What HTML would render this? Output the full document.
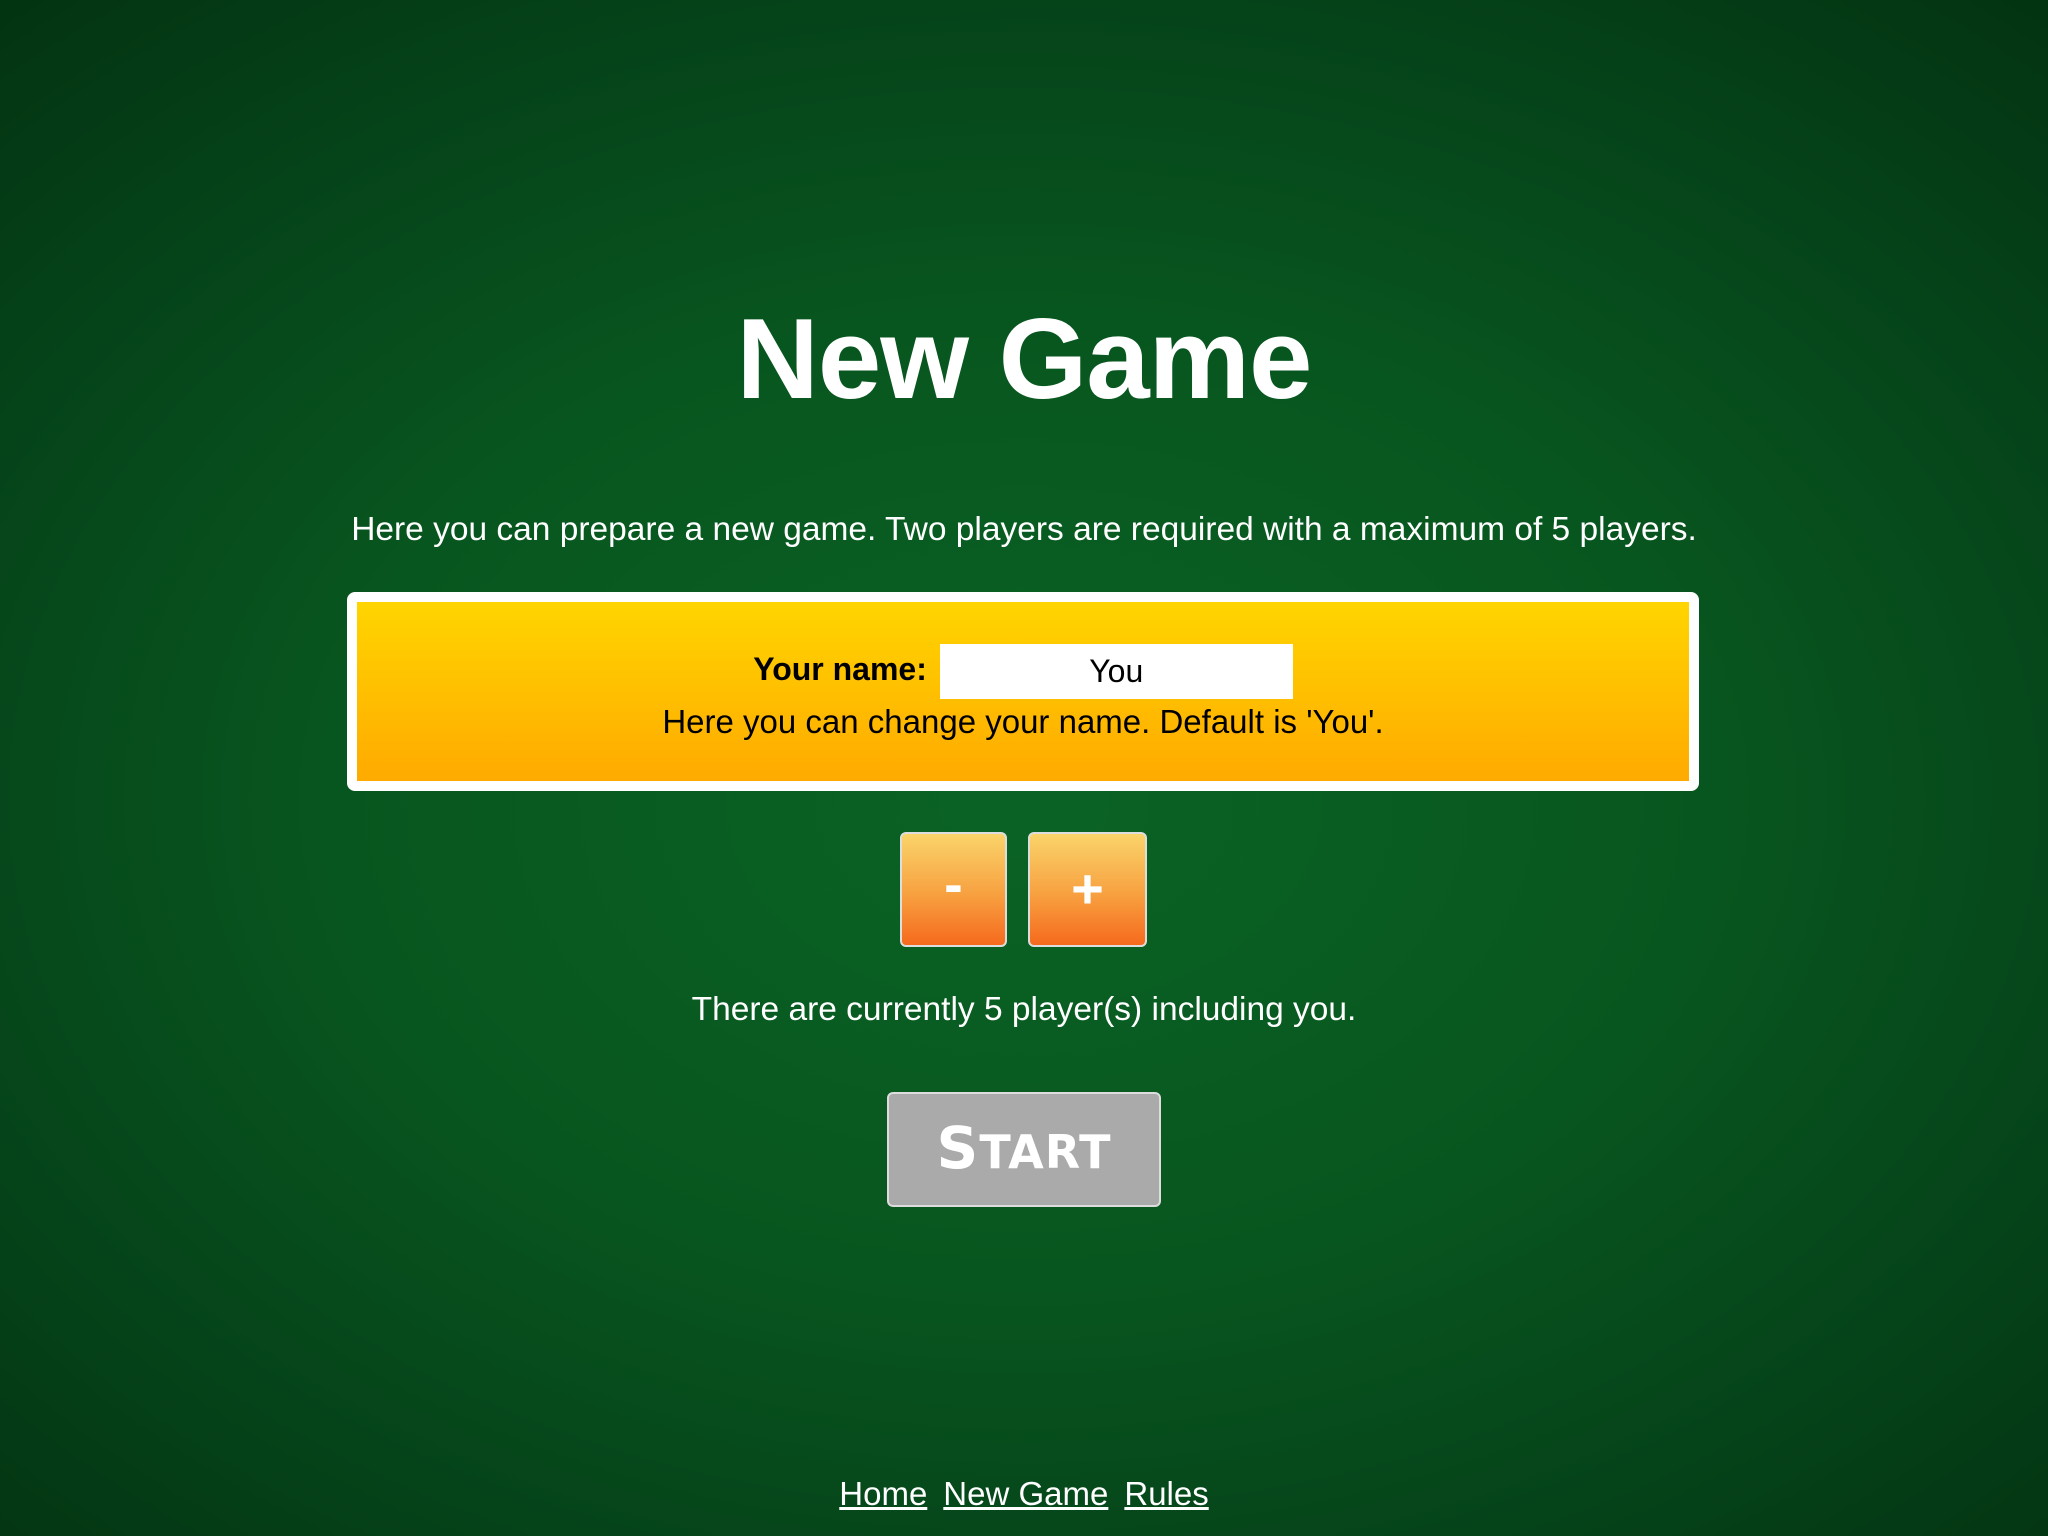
<!DOCTYPE html>
<html><head><meta charset="utf-8"><style>
html,body{margin:0;padding:0;width:2048px;height:1536px;overflow:hidden}
body{background:radial-gradient(ellipse 75% 70% at 50% 52%,#0a6324 0%,#08561f 45%,#054319 75%,#033312 100%);font-family:"Liberation Sans",sans-serif;color:#fff;position:relative}
.a{position:absolute;left:0;width:2048px;text-align:center}
h1{margin:0;font-size:114px;font-weight:bold;top:285px;line-height:150px;letter-spacing:-1px}
.p{font-size:33.5px;top:510px;line-height:40px}
.box{position:absolute;left:347px;top:592px;width:1352px;height:199px;box-sizing:border-box;border:10px solid #fff;border-radius:8px;background:linear-gradient(#ffd500,#ffaa00);color:#000;text-align:center}
.lbl{position:absolute;left:0;width:100%;top:40px;font-size:32px;line-height:55px}
.inp{display:inline-block;vertical-align:middle;width:353px;height:55px;background:#fff;font-weight:normal;margin-left:4px;font-size:32px;line-height:55px}
.l2{position:absolute;left:0;width:100%;top:100px;font-size:33px;line-height:40px}
.btn{position:absolute;box-sizing:border-box;border:2px solid #ddd;border-radius:6px;background:linear-gradient(#fad46a,#f7a040 55%,#f66a1e);color:#fff;font-weight:bold;text-align:center}
.start{position:absolute;left:887px;top:1092px;width:274px;height:115px;box-sizing:border-box;border:2px solid #ddd;border-radius:6px;background:#aaa;color:#fff;font-weight:bold;font-size:58px;line-height:108px;text-align:center;font-family:"DejaVu Sans",sans-serif;letter-spacing:1px}
.f{top:1474px;font-size:33px;line-height:40px}
.f a{color:#fff;margin:0 8px;text-decoration:underline}
</style></head><body>
<h1 class="a">New Game</h1>
<div class="a p">Here you can prepare a new game. Two players are required with a maximum of 5 players.</div>
<div class="box">
<div class="lbl"><b>Your name:</b> <span class="inp">You</span></div>
<div class="l2">Here you can change your name. Default is 'You'.</div>
</div>
<div class="btn" style="left:900px;top:832px;width:107px;height:115px;font-size:56px;line-height:100px">-</div>
<div class="btn" style="left:1028px;top:832px;width:119px;height:115px;font-size:56px;line-height:110px">+</div>
<div class="a p" style="top:990px">There are currently 5 player(s) including you.</div>
<div class="start">S<span style="font-size:46px">TART</span></div>
<div class="a f"><a>Home</a><a>New Game</a><a>Rules</a></div>
</body></html>
